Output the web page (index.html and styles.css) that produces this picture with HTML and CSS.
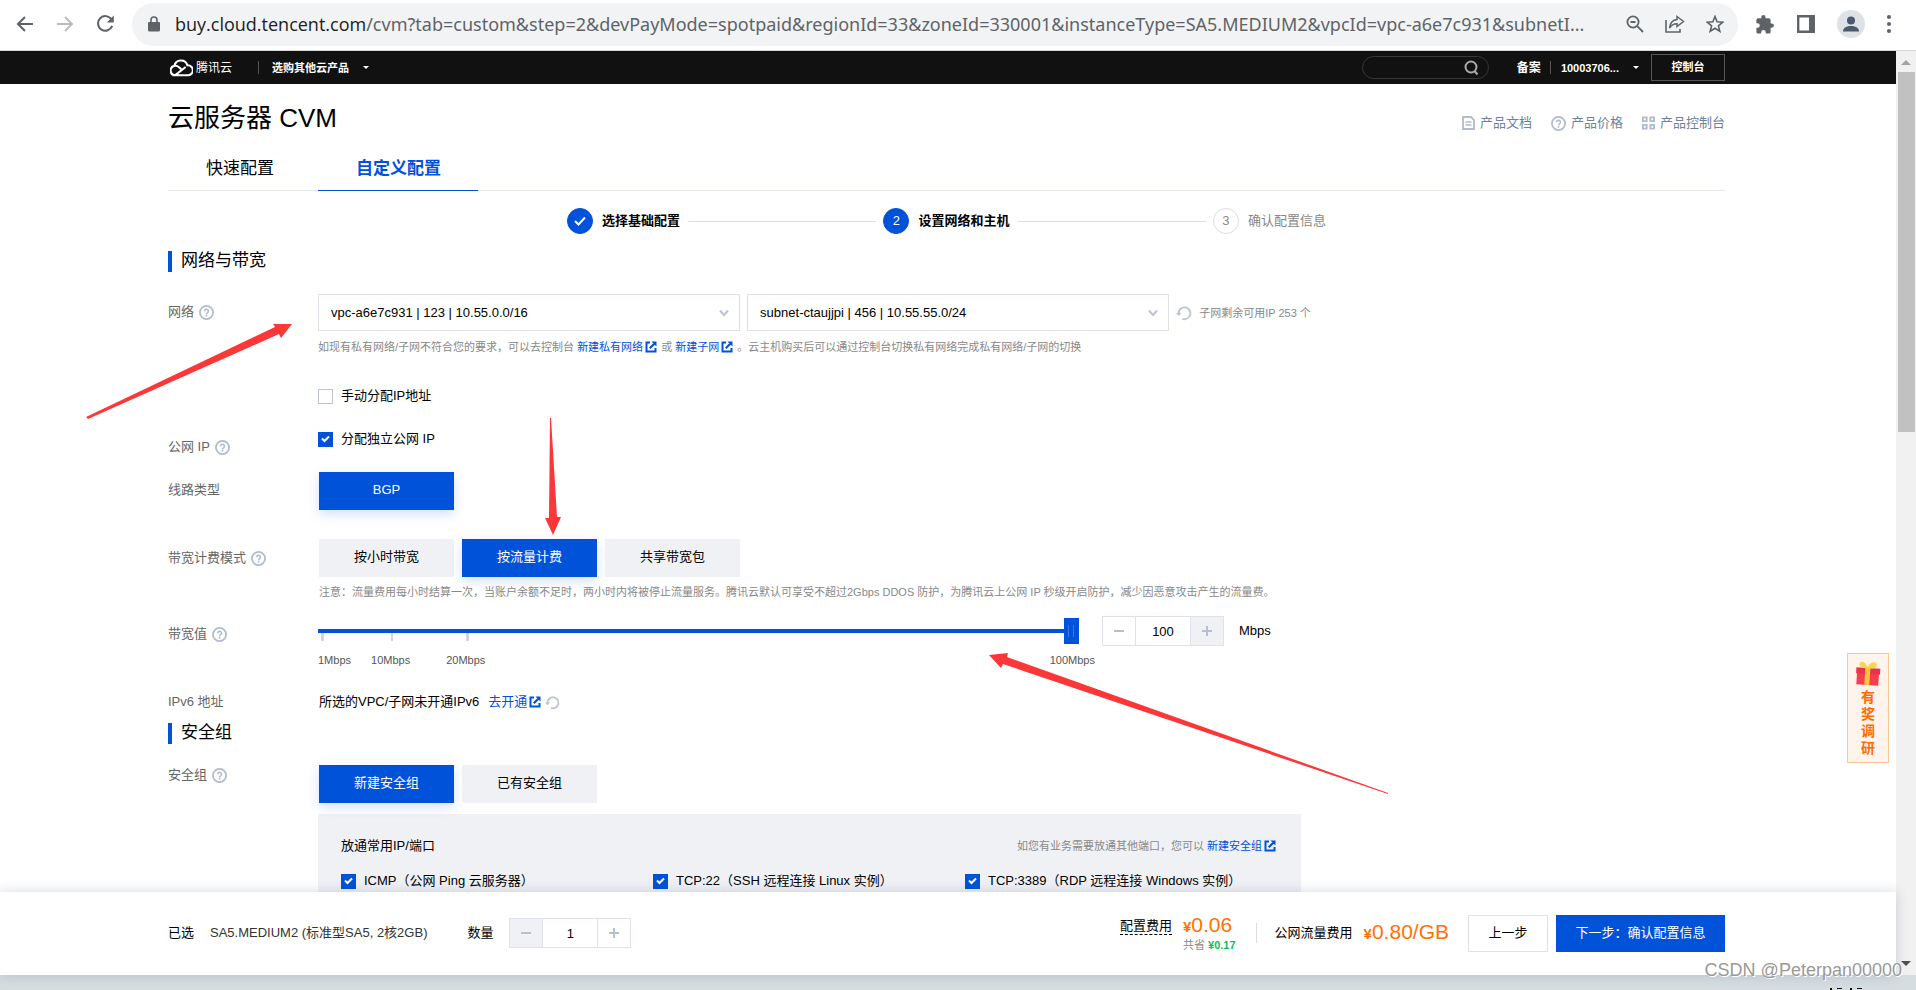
FILE: index.html
```html
<!DOCTYPE html>
<html lang="zh-CN">
<head>
<meta charset="utf-8">
<title>云服务器 CVM</title>
<link rel="stylesheet" href="styles.css">
</head>
<body>
<svg class="defs" aria-hidden="true">
  <symbol id="i-help" viewBox="0 0 16 16"><circle cx="8" cy="8" r="7" fill="none" stroke="currentColor" stroke-width="1.9"/><path d="M5.9 6.6a2.1 2.1 0 1 1 3.2 1.8c-.8.5-1.1.8-1.1 1.6" fill="none" stroke="currentColor" stroke-width="1.6"/><rect x="7.2" y="10.8" width="1.7" height="1.7" fill="currentColor"/></symbol>
  <symbol id="i-refresh" viewBox="0 0 16 16"><path d="M2.6 8.5A5.9 5.9 0 1 1 6.4 13.8" fill="none" stroke="currentColor" stroke-width="1.9"/><path d="M0 8h5.4L2.8 11z" fill="currentColor"/></symbol>
  <symbol id="i-out" viewBox="0 0 12 12"><path d="M5 1.5H1.5v9h9V7" fill="none" stroke="currentColor" stroke-width="2"/><path d="M6.500.5h5v5zM4 6.500 5.500 8l4.300-4.300L8.300 2.200z" fill="currentColor"/></symbol>
  <symbol id="i-minus" viewBox="0 0 12 12"><path d="M1 6h10" stroke="currentColor" stroke-width="2"/></symbol>
  <symbol id="i-plus" viewBox="0 0 12 12"><path d="M1 6h10M6 1v10" stroke="currentColor" stroke-width="2"/></symbol>
</svg>

<header class="toolbar">
  <nav class="toolbar-nav">
    <button class="tool" aria-label="Back"><svg width="18" height="18" viewBox="0 0 18 18"><path d="M17 9H2M9 2 2 9l7 7" fill="none" stroke="#5f6368" stroke-width="2"/></svg></button>
    <button class="tool" aria-label="Forward"><svg width="18" height="18" viewBox="0 0 18 18"><path d="M1 9h15M9 2l7 7-7 7" fill="none" stroke="#babcbe" stroke-width="2"/></svg></button>
    <button class="tool" aria-label="Reload"><svg width="18" height="18" viewBox="0 0 18 18"><path d="M15.500 4.500A7.300 7.300 0 1 0 16.200 10.800" fill="none" stroke="#5f6368" stroke-width="2"/><path d="M17.800.6v7h-7z" fill="#5f6368"/></svg></button>
  </nav>
  <div class="omnibox">
    <svg class="lock" width="12" height="16" viewBox="0 0 12 16"><path d="M1 6h10a1 1 0 0 1 1 1v7a1.500 1.500 0 0 1-1.500 1.500h-9A1.500 1.500 0 0 1 0 14V7a1 1 0 0 1 1-1z" fill="#5f6368"/><path d="M3 6.500V4a3 3 0 0 1 6 0v2.500" fill="none" stroke="#5f6368" stroke-width="1.600"/></svg>
    <div class="url"><span class="url-host">buy.cloud.tencent.com</span>/cvm?tab=custom&amp;step=2&amp;devPayMode=spotpaid&amp;regionId=33&amp;zoneId=330001&amp;instanceType=SA5.MEDIUM2&amp;vpcId=vpc-a6e7c931&amp;subnetI...</div>
    <div class="omni-actions">
      <button class="tool" aria-label="Zoom"><svg width="18" height="18" viewBox="0 0 18 18"><circle cx="7" cy="7" r="5.600" fill="none" stroke="#5f6368" stroke-width="1.800"/><path d="M4.500 7h5M11.200 11.200l5.800 5.800" stroke="#5f6368" stroke-width="1.800"/></svg></button>
      <button class="tool" aria-label="Share"><svg width="20" height="18" viewBox="0 0 20 18"><path d="M1 5v12h14v-3" fill="none" stroke="#5f6368" stroke-width="1.600"/><path d="M12 1.500 18.500 6.500 12 11.500V8.800C8.500 8.800 6 10.500 4.500 13 5 8.500 7.500 5 12 4.500z" fill="none" stroke="#5f6368" stroke-width="1.500"/></svg></button>
      <button class="tool" aria-label="Bookmark"><svg width="18" height="18" viewBox="0 0 18 18"><path d="M9 1.500l2.100 5.300 5.700.4-4.400 3.600 1.400 5.500L9 13.300l-4.800 3 1.400-5.500L1.200 7.200l5.700-.4z" fill="none" stroke="#5f6368" stroke-width="1.600"/></svg></button>
    </div>
  </div>
  <div class="toolbar-end">
    <button class="tool" aria-label="Extensions"><svg width="19" height="19" viewBox="0 0 19 19"><path d="M15.800 8.500h-1.200V5a1.700 1.700 0 0 0-1.700-1.700H9.500V2.200a2.100 2.100 0 0 0-4.200 0v1.100H2A1.700 1.700 0 0 0 .4 5v3.200h1.100a2.300 2.300 0 0 1 0 4.600H.4V17a1.600 1.600 0 0 0 1.600 1.600h3.200v-1.200a2.300 2.300 0 0 1 4.600 0v1.200h3.200a1.600 1.600 0 0 0 1.600-1.600v-4.300h1.200a2.100 2.100 0 0 0 0-4.200z" fill="#5f6368"/></svg></button>
    <button class="tool" aria-label="Side panel"><svg width="18" height="18" viewBox="0 0 18 18"><path d="M1.200 1.200h15.600v15.600H1.200z" fill="none" stroke="#5f6368" stroke-width="2.400"/><path d="M12 1h5v16h-5z" fill="#5f6368"/></svg></button>
    <button class="tool" aria-label="Profile"><svg width="28" height="28" viewBox="0 0 28 28"><circle cx="14" cy="14" r="14" fill="#dee1e6"/><circle cx="14" cy="10.500" r="4" fill="#4c5a70"/><path d="M6 21.500c0-4 4-5.500 8-5.500s8 1.500 8 5.500z" fill="#4c5a70"/></svg></button>
    <button class="tool" aria-label="Menu"><svg width="4" height="18" viewBox="0 0 4 18"><g fill="#5f6368"><circle cx="2" cy="2" r="2"/><circle cx="2" cy="9" r="2"/><circle cx="2" cy="16" r="2"/></g></svg></button>
  </div>
</header>

<div class="viewport">
  <div class="page">
    <div class="topbar">
      <div class="wrap topbar-in">
        <a class="brand" href="#"><svg width="23" height="18" viewBox="1 0 23 18"><path d="M6.200 16.200A4.700 4.700 0 0 1 5.400 6.900 6.700 6.700 0 0 1 18.400 6.300 5 5 0 1 1 18 16.200H6.200L16.600 8" fill="none" stroke="#fff" stroke-width="2.100"/><path d="M5 7c2-.6 3.800 0 5.300 1.400l2 1.900" fill="none" stroke="#fff" stroke-width="2.100"/></svg><span>腾讯云</span></a>
        <span class="vline"></span>
        <button class="top-menu">选购其他云产品<i class="caret"></i></button>
        <div class="search"><input type="text" aria-label="搜索"><svg width="15" height="16" viewBox="0 0 15 16"><circle cx="7" cy="7" r="5.500" fill="none" stroke="#aaa" stroke-width="2"/><path d="M10.500 11l3 3.500" stroke="#aaa" stroke-width="2"/></svg></div>
        <a class="top-link" href="#">备案</a>
        <span class="vline vline-r"></span>
        <button class="top-menu account">10003706...<i class="caret"></i></button>
        <a class="console" href="#">控制台</a>
      </div>
    </div>

    <main class="wrap">
      <div class="title-row">
        <h1>云服务器 CVM</h1>
        <div class="title-links">
          <a href="#"><svg width="13" height="14" viewBox="0 0 13 14"><path d="M1 1h8l3 3v9H1z" fill="none" stroke="currentColor" stroke-width="1.800"/><path d="M3.500 6h6M3.500 9h6" stroke="currentColor" stroke-width="1.500"/></svg>产品文档</a>
          <a href="#"><svg width="15" height="15"><use href="#i-help"/></svg>产品价格</a>
          <a href="#"><svg width="13" height="14" viewBox="0 0 14 14"><path d="M1 1h4v4H1zM9 1h4v4H9zM1 9h4v4H1zM9 9h4v4H9z" fill="none" stroke="currentColor" stroke-width="2"/></svg>产品控制台</a>
        </div>
      </div>
      <div class="tabs">
        <button class="tab">快速配置</button>
        <button class="tab tab-on">自定义配置</button>
      </div>
      <ol class="steps">
        <li class="step done"><span class="dot"><svg width="12" height="10" viewBox="0 0 12 10"><path d="M1 5l3.500 3.500L11 1.500" fill="none" stroke="#fff" stroke-width="2"/></svg></span>选择基础配置</li>
        <li class="rule"></li>
        <li class="step done"><span class="dot">2</span>设置网络和主机</li>
        <li class="rule"></li>
        <li class="step"><span class="dot">3</span>确认配置信息</li>
      </ol>

      <h2>网络与带宽</h2>
      <div class="row row-net">
        <div class="label">网络<svg width="15" height="15"><use href="#i-help"/></svg></div>
        <div class="field">
          <div class="selects">
            <select class="select" aria-label="网络"><option>vpc-a6e7c931 | 123 | 10.55.0.0/16</option></select>
            <select class="select" aria-label="子网"><option>subnet-ctaujjpi | 456 | 10.55.55.0/24</option></select>
            <button class="icon-btn" aria-label="刷新"><svg width="16" height="16"><use href="#i-refresh"/></svg></button>
            <span class="hint">子网剩余可用IP 253 个</span>
          </div>
          <p class="hint">如现有私有网络/子网不符合您的要求，可以去控制台 <a href="#">新建私有网络<svg width="12" height="12"><use href="#i-out"/></svg></a> 或 <a href="#">新建子网<svg width="12" height="12"><use href="#i-out"/></svg></a> 。云主机购买后可以通过控制台切换私有网络完成私有网络/子网的切换</p>
          <label class="check"><input type="checkbox">手动分配IP地址</label>
        </div>
      </div>
      <div class="row row-ip">
        <div class="label">公网 IP<svg width="15" height="15"><use href="#i-help"/></svg></div>
        <div class="field"><label class="check"><input type="checkbox" checked>分配独立公网 IP</label></div>
      </div>
      <div class="row row-line">
        <div class="label">线路类型</div>
        <div class="field segs"><button class="seg seg-on">BGP</button></div>
      </div>
      <div class="row row-bill">
        <div class="label">带宽计费模式<svg width="15" height="15"><use href="#i-help"/></svg></div>
        <div class="field">
          <div class="segs"><button class="seg">按小时带宽</button><button class="seg seg-on">按流量计费</button><button class="seg">共享带宽包</button></div>
          <p class="hint">注意：流量费用每小时结算一次，当账户余额不足时，两小时内将被停止流量服务。腾讯云默认可享受不超过2Gbps DDOS 防护，为腾讯云上公网 IP 秒级开启防护，减少因恶意攻击产生的流量费。</p>
        </div>
      </div>
      <div class="row row-bw">
        <div class="label">带宽值<svg width="15" height="15"><use href="#i-help"/></svg></div>
        <div class="field bw">
          <div class="slider">
            <input class="range" type="range" min="1" max="100" value="100" aria-label="带宽值">
            <div class="marks"><span>1Mbps</span><span>10Mbps</span><span>20Mbps</span><span>100Mbps</span></div>
          </div>
          <div class="stepper"><button aria-label="减少"><svg width="12" height="12"><use href="#i-minus"/></svg></button><input type="text" value="100" aria-label="带宽"><button class="off" aria-label="增加"><svg width="12" height="12"><use href="#i-plus"/></svg></button></div>
          <span class="unit">Mbps</span>
        </div>
      </div>
      <div class="row row-v6">
        <div class="label">IPv6 地址</div>
        <div class="field v6">所选的VPC/子网未开通IPv6<a href="#">去开通<svg width="12" height="12"><use href="#i-out"/></svg></a><button class="icon-btn" aria-label="刷新"><svg width="15" height="15"><use href="#i-refresh"/></svg></button></div>
      </div>

      <h2 class="h2-sg">安全组</h2>
      <div class="row row-sg">
        <div class="label">安全组<svg width="15" height="15"><use href="#i-help"/></svg></div>
        <div class="field">
          <div class="segs"><button class="seg seg-on">新建安全组</button><button class="seg">已有安全组</button></div>
          <div class="panel">
            <div class="panel-head"><span>放通常用IP/端口</span><p class="hint">如您有业务需要放通其他端口，您可以 <a href="#">新建安全组<svg width="12" height="12"><use href="#i-out"/></svg></a></p></div>
            <div class="ports">
              <label class="check"><input type="checkbox" checked>ICMP（公网 Ping 云服务器）</label>
              <label class="check"><input type="checkbox" checked>TCP:22（SSH 远程连接 Linux 实例）</label>
              <label class="check"><input type="checkbox" checked>TCP:3389（RDP 远程连接 Windows 实例）</label>
            </div>
          </div>
        </div>
      </div>
    </main>

    <footer class="buybar">
      <div class="wrap buybar-in">
        <span class="picked">已选</span><span class="spec">SA5.MEDIUM2 (标准型SA5, 2核2GB)</span>
        <span class="qty">数量</span>
        <div class="stepper"><button class="off" aria-label="减少"><svg width="12" height="12"><use href="#i-minus"/></svg></button><input type="text" value="1" aria-label="数量"><button aria-label="增加"><svg width="12" height="12"><use href="#i-plus"/></svg></button></div>
        <div class="cost"><span class="cost-name">配置费用</span><div class="cost-val"><span class="price"><b>¥</b>0.06</span><span class="save">共省 <b>¥0.17</b></span></div></div>
        <span class="split"></span>
        <span class="flow">公网流量费用</span><span class="price"><b>¥</b>0.80/GB</span>
        <button class="btn">上一步</button><button class="btn btn-main">下一步：确认配置信息</button>
      </div>
    </footer>
  </div>
  <div class="scrollbar"><i class="arrow-up"></i><i class="thumb"></i><i class="arrow-down"></i></div>
</div>
<div class="taskbar"><svg width="36" height="2" viewBox="0 0 36 2" aria-hidden="true"><path d="M3 0h2v2H3zM10 0h5v1h-5zM23 0h2v2h-2zM30 0h5v1h-5z" fill="#111"/></svg></div>

<aside class="survey"><svg width="26" height="26" viewBox="0 0 26 26"><g transform="rotate(4 13 13)"><path d="M2 9h22v15H2z" fill="#f53f4f"/><path d="M1 7h24v6H1z" fill="#e8344a"/><path d="M10 7h5v17h-5z" fill="#ffc53d"/><path d="M12 7C8 8 3 7 4 3s6-2 8 3c2-5 8-7 9-3s-4 5-9 4z" fill="#fbd44e"/></g></svg><span>有奖调研</span></aside>
<svg class="marks-red" width="1400" height="800" viewBox="0 0 1400 800" fill="#fc3737" aria-hidden="true">
  <path d="M86 417L275 327 273 324 292 324 281 338 279 334 88 419z"/>
  <path d="M550 418L549 518 545 518 553 535 561 517 557 517 551 418z"/>
  <path d="M989 655L1008 653 1007 657 1388 793 1388 794 1003 664 1001 668z"/>
</svg>
<div class="watermark">CSDN @Peterpan00000</div>
</body>
</html>
```
FILE: styles.css
```css
* { box-sizing: border-box; }
body {
  margin: 0;
  height: 100vh;
  display: flex;
  flex-direction: column;
  overflow: hidden;
  position: relative;
  background: #fff;
  color: #000;
  font: 13px/20px "Liberation Sans", "Noto Sans CJK SC", sans-serif;
}
button, input, select { font: inherit; color: inherit; margin: 0; padding: 0; border: 0; background: none; border-radius: 0; }
h1, h2, p, ol { margin: 0; padding: 0; font-weight: 400; list-style: none; }
a { color: #0052d9; text-decoration: none; }
svg { flex: none; display: block; }
.defs { position: absolute; width: 0; height: 0; }

/* browser toolbar */
.toolbar { display: flex; align-items: center; flex: none; height: 51px; padding: 0 25px 2px 16px; border-bottom: 1px solid #d4d6d8; }
.toolbar-nav { display: flex; gap: 22px; width: 116px; }
.tool { display: flex; align-items: center; justify-content: center; }
.omnibox { flex: 1; display: flex; align-items: center; height: 43px; padding: 0 14px 0 16px; border-radius: 22px; background: #f1f3f4; min-width: 0; }
.url { flex: 1; min-width: 0; overflow: hidden; white-space: nowrap; margin-left: 15px; font: 18px/28px "Noto Sans", "Open Sans", sans-serif; color: #5f6368; }
.url-host { color: #202124; font-family: "Open Sans", sans-serif; }
.omni-actions { display: flex; gap: 21px; }
.toolbar-end { display: flex; align-items: center; gap: 22px; margin-left: 18px; }

.viewport { flex: 1; min-height: 0; display: flex; }
.page { flex: 1; min-width: 0; display: flex; flex-direction: column; }
.wrap { margin-left: 168px; margin-right: 171px; }

/* black bar */
.topbar { flex: none; height: 33px; background: #111; color: #fff; font-size: 11px; font-weight: 700; }
.topbar-in { display: flex; align-items: center; height: 33px; }
.brand { display: flex; align-items: center; gap: 2px; color: #fff; font-size: 12px; font-weight: 400; }
.vline { width: 1px; height: 13px; margin: 0 13px 0 26px; background: #555; }
.vline-r { margin: 0 10px 0 9px; }
.top-menu { display: flex; align-items: center; gap: 14px; font-weight: 700; }
.caret { border: 3px solid transparent; border-top-color: #fff; border-bottom: 0; }
.search { display: flex; align-items: center; margin-left: auto; width: 127px; height: 23px; padding: 0 9px; border: 1px solid #383838; border-radius: 12px; }
.search input { flex: 1; min-width: 0; }
.top-link { margin-left: 28px; color: #fff; font-size: 12px; }
.account { margin-right: 12px; }
.console { width: 74px; height: 27px; line-height: 25px; text-align: center; border: 1px solid #555; color: #fff; }

main.wrap { flex: 1; min-height: 0; overflow: hidden; padding-right: 0; }
.title-row { display: flex; justify-content: space-between; height: 66px; padding-top: 14px; }
h1 { font-size: 26px; line-height: 40px; }
.title-links { display: flex; gap: 17px; padding-top: 15px; }
.title-links a { display: flex; align-items: center; gap: 4px; height: 20px; color: #6e829d; }
.title-links svg { color: #b0bccd; }
.tabs { display: flex; gap: 6px; height: 41px; border-bottom: 1px solid #e5e8ed; }
.tab { height: 41px; padding: 0 38px 3px; font-size: 17px; }
.tab-on { padding: 0 37px 3px 38px; color: #0052d9; font-weight: 700; border-bottom: 1px solid #0052d9; }

.steps { display: flex; align-items: center; width: 49%; margin: 17px auto 0; height: 26px; padding: 0 2px; }
.step { display: flex; align-items: center; gap: 9px; color: #888; }
.done { color: #000; font-weight: 700; }
.dot { display: flex; align-items: center; justify-content: center; width: 26px; height: 26px; border-radius: 50%; border: 1px solid #ddd; font-weight: 400; }
.done .dot { background: #0052d9; border-color: #0052d9; color: #fff; }
.rule { flex: 1; height: 1px; margin: 0 7px 0 8px; background: #ddd; }

h2 { display: flex; align-items: center; gap: 9px; margin-top: 16px; height: 22px; font-size: 17px; line-height: 22px; }
h2::before { content: ""; width: 4px; height: 21px; background: #0052d9; }
.h2-sg { margin-top: 10px; }
.row { display: flex; }
.label { display: flex; align-items: center; gap: 5px; width: 150px; height: 20px; flex: none; color: #666; }
.label svg { color: #b0bccd; }
.field { flex: 1; min-width: 0; }
.hint { font-size: 11px; line-height: 16px; color: #888; }
a svg { display: inline-block; vertical-align: -2px; margin: 0 1px 0 2px; }
.row-net { margin-top: 22px; }
.row-net .label { margin-top: 8px; }
.selects { display: flex; align-items: center; gap: 7px; }
.selects > .hint { white-space: nowrap; }
.select {
  appearance: none; width: 30%; height: 37px; padding: 0 12px; border: 1px solid #dfe2e9;
  background: url("data:image/svg+xml,%3Csvg xmlns='http://www.w3.org/2000/svg' width='10' height='8'%3E%3Cpath d='M1 1.500 5 6l4-4.500' fill='none' stroke='%23bcc4d4' stroke-width='2'/%3E%3C/svg%3E") no-repeat right 10px center;
}
.row-net p { margin-top: 8px; }
.check { display: flex; align-items: center; gap: 8px; height: 20px; }
.check input {
  appearance: none; flex: none; width: 15px; height: 15px; border: 1px solid #bcc4d0; background: #fff;
}
.check input:checked {
  border-color: #0052d9;
  background: #0052d9 url("data:image/svg+xml,%3Csvg xmlns='http://www.w3.org/2000/svg' width='9' height='8'%3E%3Cpath d='M1 3.500 3.500 6 8 1.500' fill='none' stroke='%23fff' stroke-width='2'/%3E%3C/svg%3E") no-repeat center;
}
.row-net .check { margin-top: 31px; }
.row-ip { margin-top: 23px; }
.row-ip .label { margin-top: 8px; }
.row-line { margin-top: 15px; }
.row-line .label { margin-top: 8px; }
.segs { display: flex; gap: 8px; padding-left: 1px; }
.seg { width: 135px; height: 38px; padding-bottom: 2px; background: #f0f1f5; }
.seg-on { background: #0052d9; color: #fff; box-shadow: 0 4px 12px rgba(0, 82, 217, .18); }
.row-bill { margin-top: 29px; }
.row-bill .label { margin-top: 9px; }
.row-bill .hint { margin-top: 7px; padding-left: 1px; }
.row-bw { margin-top: 16px; }
.row-bw .label { margin-top: 8px; }
.bw { display: flex; align-items: flex-start; height: 54px; }
.slider { width: 761px; }
.range { appearance: none; display: block; width: 100%; height: 30px;
  background:
    linear-gradient(#0052d9, #0052d9) 0 13px / 100% 4px,
    linear-gradient(#d0d5e0, #d0d5e0) 3px 17px / 3px 8px,
    linear-gradient(#d0d5e0, #d0d5e0) 73px 17px / 2px 8px,
    linear-gradient(#d0d5e0, #d0d5e0) 148px 17px / 3px 8px;
  background-repeat: no-repeat;
}
.range::-webkit-slider-thumb { appearance: none; width: 15px; height: 26px;
  background: linear-gradient(90deg, transparent 4px, #3878e2 4px 5px, transparent 5px 9px, #3878e2 9px 10px, transparent 10px) center / 15px 12px no-repeat, #0052d9; }
.marks { display: flex; margin-right: -16px; padding-top: 6px; font-size: 11px; line-height: 16px; color: #555; }
.marks span + span { margin-left: 20px; }
.marks span:nth-child(3) { margin-left: 36px; }
.marks span:nth-child(4) { margin-left: auto; }
.stepper { display: flex; margin-left: 23px; }
.stepper button { display: flex; align-items: center; justify-content: center; width: 34px; height: 30px; border: 1px solid #dfe2e9; color: #b8c0ce; }
.stepper .off { background: #f0f1f5; }
.stepper input { width: 54px; height: 30px; text-align: center; border: 1px solid #dfe2e9; border-width: 1px 0; }
.unit { margin: 5px 0 0 15px; }
.row-v6 { margin-top: 22px; }
.v6 { display: flex; align-items: center; padding-left: 1px; }
.v6 a { margin-left: 9px; }
.icon-btn { display: flex; color: #bcc4d4; }
.v6 .icon-btn { margin-left: 3px; }
.row-sg { margin-top: 21px; }
.panel { width: 983px; margin-top: 11px; padding: 22px 24px 30px 23px; background: #f0f1f5; }
.panel-head { display: flex; align-items: center; justify-content: space-between; }
.ports { display: grid; grid-template-columns: repeat(3, 1fr); margin-top: 15px; }
.ports .check { white-space: nowrap; }

/* purchase bar */
.buybar { flex: none; height: 83px; background: #fff; box-shadow: 0 0 12px rgba(40, 60, 100, .2); position: relative; }
.buybar-in { display: flex; align-items: center; height: 82px; }
.spec { margin-left: 16px; color: #333; }
.qty { margin-left: 40px; }
.buybar .stepper { margin-left: 16px; }
.cost { display: flex; align-items: flex-start; gap: 11px; margin-left: auto; }
.cost-name { border-bottom: 1px dashed #000; line-height: 17px; margin-top: 3px; }
.cost-val { display: flex; flex-direction: column; }
.price { font-size: 21px; line-height: 22px; color: #ff7200; }
.price b { font-size: 15px; }
.save { font-size: 11px; line-height: 14px; color: #888; }
.save b { color: #0abf5b; }
.split { width: 1px; height: 20px; margin: 0 18px 0 20px; background: #ddd; }
.flow { margin-right: 11px; }
.btn { width: 80px; height: 37px; margin-left: 19px; border: 1px solid #dfe2e9; }
.btn-main { width: 169px; margin-left: 8px; border-color: #0052d9; background: #0052d9; color: #fff; }

.scrollbar { display: flex; flex-direction: column; align-items: center; width: 20px; background: #f1f1f1; }
.arrow-up { margin: 9px 0 7px; border: 5px solid transparent; border-bottom-color: #a3a3a3; border-top: 0; }
.thumb { width: 17px; height: 39%; background: #c1c1c1; }
.arrow-down { margin: auto 0 9px; border: 5px solid transparent; border-top-color: #505050; border-bottom: 0; }
.taskbar { display: flex; align-items: flex-end; justify-content: flex-end; flex: none; height: 15px; padding-right: 53px; background: #d5dde0; }

/* overlays */
.survey { position: absolute; right: 27px; top: 653px; width: 42px; padding: 7px 0 5px; display: flex; flex-direction: column; align-items: center; gap: 2px; border: 1px solid #fcc596; background: #fff4ec; color: #ff6a00; }
.survey span { width: 14px; font-size: 14px; line-height: 17px; font-weight: 700; word-break: break-all; }
.marks-red { position: absolute; left: 0; top: 0; pointer-events: none; }
.watermark { position: absolute; right: 14px; bottom: 8px; font-size: 18px; line-height: 24px; color: #999; text-shadow: 1px 1px 0 #fff; }
```
